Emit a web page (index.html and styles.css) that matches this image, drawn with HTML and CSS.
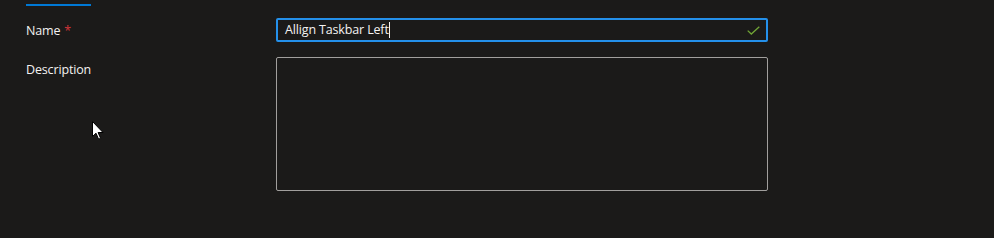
FILE: index.html
```html
<!DOCTYPE html>
<html>
<head>
<meta charset="utf-8">
<link rel="stylesheet" href="styles.css">
</head>
<body>
<div class="page">
  <div class="tab-indicator"></div>
  <div class="form">
    <div class="label label-name">Name <span class="req">*</span></div>
    <div class="field">
      <div class="input">
        <span class="value">Allign Taskbar Left</span><span class="caret"></span>
        <svg class="check" width="13" height="9" viewBox="0 0 13 9"><path d="M0.7 4.6 L4.3 8 L12.3 0.7" fill="none" stroke="#71a536" stroke-width="1.3"/></svg>
      </div>
    </div>
    <div class="label label-desc">Description</div>
    <div class="field">
      <div class="textarea"></div>
    </div>
  </div>
  <svg class="pointer" width="13" height="20" viewBox="0 0 13 20">
    <path d="M0.5 0.5 L0.5 15.5 L4 12.2 L6.6 18.2 L8.6 17.3 L6.1 11.5 L11 11.5 Z" fill="#ffffff" stroke="#000000" stroke-width="1"/>
  </svg>
</div>
</body>
</html>
```

FILE: styles.css
```css
html, body {
  margin: 0;
  padding: 0;
  background: #1b1a19;
}
.page {
  position: relative;
  width: 994px;
  height: 238px;
  overflow: hidden;
  font-family: "Open Sans", "Noto Sans", sans-serif;
  font-size: 12.5px;
  letter-spacing: -0.15px;
  color: #f3f2f1;
}
.tab-indicator {
  margin-left: 26px;
  margin-top: 4px;
  width: 65px;
  height: 2px;
  background: #0078d4;
}
.form {
  display: grid;
  grid-template-columns: 250px 492px;
  row-gap: 15px;
  margin-top: 12px;
  padding-left: 26px;
}
.label {
  line-height: 18px;
}
.label-name {
  box-sizing: border-box;
  display: flex;
  align-items: center;
  height: 24px;
  padding-top: 2px;
}
.label-desc {
  padding-top: 4px;
}
.req {
  color: #d13438;
  margin-left: 4px;
}
.input {
  box-sizing: border-box;
  height: 24px;
  border: 2px solid #2490ea;
  border-radius: 2px;
  display: flex;
  align-items: center;
  padding-left: 7px;
  padding-right: 4px;
}
.value {
  line-height: 18px;
}
.caret {
  width: 1px;
  height: 16px;
  background: #f3f2f1;
}
.check {
  margin-left: auto;
  margin-right: 2px;
}
.textarea {
  box-sizing: border-box;
  height: 134px;
  border: 1px solid #a19f9d;
  border-radius: 2px;
}
.pointer {
  position: absolute;
  left: 92px;
  top: 121px;
}
```
